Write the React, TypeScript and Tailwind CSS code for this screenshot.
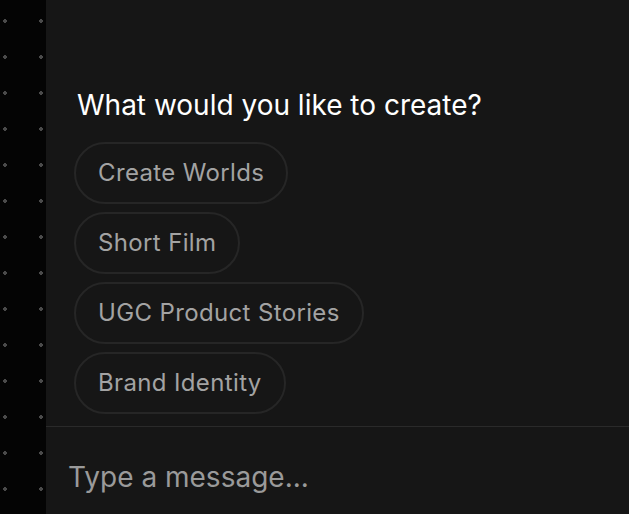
const options = ['Create Worlds', 'Short Film', 'UGC Product Stories', 'Brand Identity'];

export default function App() {
  return (
    <div
      className="flex h-[514px] w-[629px] overflow-hidden bg-[#161616] text-white"
      style={{ fontFamily: 'Inter, "Noto Sans", sans-serif' }}
    >
      <div className="w-[46px] shrink-0 bg-[#040404] bg-[radial-gradient(circle,#4a4a4a_1.6px,transparent_2.1px)] bg-[length:36px_36px] bg-[position:-13px_3px]" />

      <div className="flex min-w-0 flex-1 flex-col">
        <div className="flex flex-1 flex-col justify-end px-7 pb-[12px]">
          <h2 className="mb-[21px] pl-[3px] text-[28px] leading-8 text-white">
            What would you like to create?
          </h2>
          <div className="flex flex-col items-start gap-2">
            {options.map((o) => (
              <button
                key={o}
                className="h-[62px] rounded-full border-2 border-[#262626] px-[22px] text-[24px] tracking-[0.015em] text-[#a3a3a3]"
              >
                {o}
              </button>
            ))}
          </div>
        </div>
        <div className="flex h-[88px] items-start border-t border-[#2a2a2a] px-[22px] pt-[32px]">
          <input
            placeholder="Type a message..."
            className="w-full bg-transparent text-[28px] leading-9 text-white outline-none placeholder:text-[#9a9a9a]"
          />
        </div>
      </div>
    </div>
  );
}
